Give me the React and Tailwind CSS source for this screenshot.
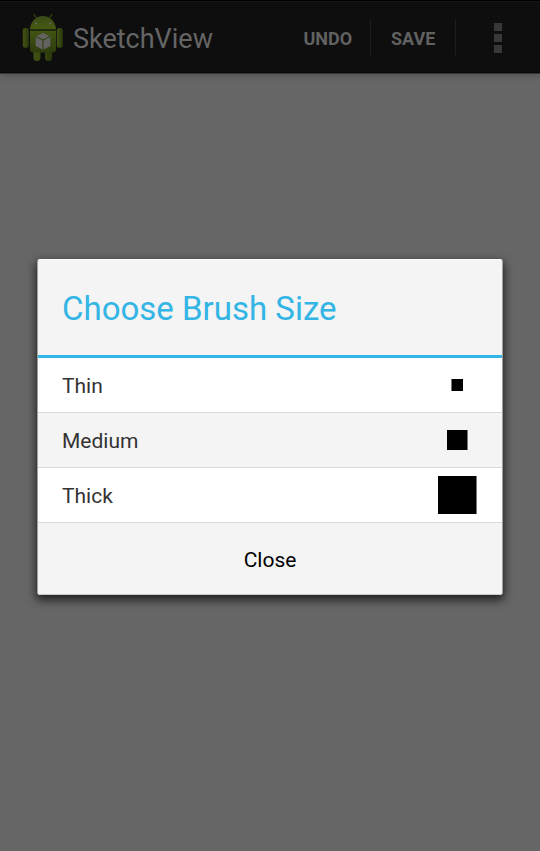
function AndroidIcon() {
  return (
    <svg width="42" height="48" viewBox="0 0 42 48" className="block shrink-0">
      <defs>
        <linearGradient id="body" x1="0" y1="0" x2="0" y2="1">
          <stop offset="0" stopColor="#425512" />
          <stop offset="1" stopColor="#2e3c0e" />
        </linearGradient>
        <linearGradient id="head" x1="0" y1="0" x2="0" y2="1">
          <stop offset="0" stopColor="#3a4a16" />
          <stop offset="1" stopColor="#485c12" />
        </linearGradient>
        <linearGradient id="limb" x1="0" y1="0" x2="1" y2="0">
          <stop offset="0" stopColor="#425413" />
          <stop offset="1" stopColor="#2a380b" />
        </linearGradient>
      </defs>
      <path d="M12 0.600L14.500 4.500M29.700 0.600L27.200 4.500" stroke="#35430f" strokeWidth="1.300" strokeLinecap="round" />
      <path d="M11.500 36h7v7.500a3.500 3.500 0 0 1-7 0zM23 36h7v7.500a3.500 3.500 0 0 1-7 0z" fill="url(#limb)" />
      <rect x="0.800" y="14" width="6" height="19.700" rx="2.200" fill="url(#limb)" />
      <rect x="34.800" y="14" width="6" height="19.700" rx="2.200" fill="url(#limb)" />
      <path d="M8 16.500h26V35a3.500 3.500 0 0 1-3.500 3.500h-19A3.500 3.500 0 0 1 8 35z" fill="url(#body)" />
      <path d="M8 15.500C8.400 7.500 14 2 21 2s12.600 5.500 13 13.500z" fill="url(#head)" />
      <path d="M8 16h26" stroke="#1a220a" strokeWidth="1" />
      <circle cx="14" cy="9.500" r="1.100" fill="#666" />
      <circle cx="28" cy="9.500" r="1.100" fill="#666" />
      <path d="M21 19l7.400 3.500v9.500L21 35.700 13.700 32v-9.500z" fill="#636363" />
      <path d="M13.700 22.500L21 26l7.400-3.500M21 26v9.700" fill="none" stroke="#33420f" strokeWidth="1.100" />
    </svg>
  );
}

const brushes = [
  { name: "Thin", row: "bg-white", cell: "pr-[39px]", box: "w-3 h-3 border-l border-[#777777]" },
  { name: "Medium", row: "bg-[#f4f4f4]", cell: "pr-[34px]", box: "w-[21px] h-5 border-r border-[#777777]" },
  { name: "Thick", row: "bg-white", cell: "pr-[25px]", box: "w-[39px] h-[38px] border-r border-[#777777]" },
];

export default function App() {
  return (
    <div className="relative h-[851px] w-[540px] overflow-hidden bg-[#666666] font-[Roboto,sans-serif]">
      <header className="flex h-[73px] items-center border-t border-black bg-[#0e0e0e] pl-[22px] shadow-[inset_0_1px_0_#161616,inset_0_-1px_0_#080808,0_1px_0_#363636,0_2px_7px_rgba(0,0,0,0.25)]">
        <div className="pt-[1px]">
          <AndroidIcon />
        </div>
        <h1 className="ml-[9px] w-[211px] pt-[3px] text-[27px] leading-8 whitespace-nowrap text-[#656565]">SketchView</h1>
        <button className="w-[86px] pt-[3px] pl-[19.500px] text-left text-[18px] leading-6 font-bold text-[#616161]">UNDO</button>
        <div className="flex h-9 w-[86px] items-center border-x border-[#1e1e1e] pt-[3px] pl-5 text-[18px] leading-6 font-bold text-[#616161]">
          SAVE
        </div>
        <div className="ml-[38px] flex flex-col gap-[3px] pt-[2px]">
          <i className="block size-2 bg-[#383838]" />
          <i className="block size-2 bg-[#383838]" />
          <i className="block size-2 bg-[#383838]" />
        </div>
      </header>

      <div
        role="dialog"
        className="absolute top-[259px] left-[37px] flex h-[336px] w-[466px] flex-col overflow-hidden rounded-[3px] border-x border-[#a0a0a0] bg-[#f4f4f4] shadow-[0_4px_10px_1px_rgba(0,0,0,0.7)]"
      >
        <h2 className="h-[99px] border-t border-b-[3px] border-t-white border-b-[#33b5e5] pt-[28px] pl-[24px] text-[33px] leading-[42px] whitespace-nowrap text-[#33b5e5]">
          Choose Brush Size
        </h2>
        {brushes.map((b) => (
          <div key={b.name} className={`flex h-[55px] items-center justify-between border-b border-[#d9d9d9] pl-[24px] ${b.row} ${b.cell}`}>
            <span className="pt-[2px] text-[21px] leading-7 text-[#333333]">{b.name}</span>
            <span className={`bg-black ${b.box}`} />
          </div>
        ))}
        <button className="flex-1 border-b border-[#c9c9c9] pt-[2px] text-[21px] leading-7 text-black">Close</button>
      </div>
    </div>
  );
}
